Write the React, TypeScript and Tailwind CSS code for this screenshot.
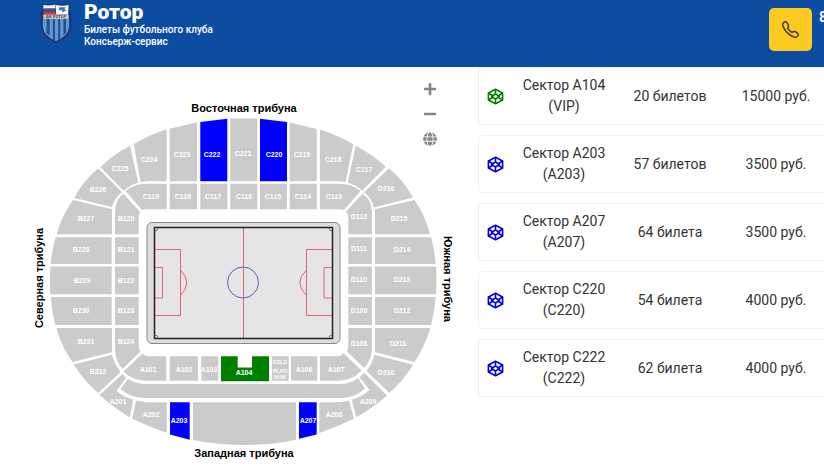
import { BsTelephone } from 'react-icons/bs';
import { FaGlobe, FaMinus, FaPlus } from 'react-icons/fa';

const GRAY = '#cbcbcb';
const BLUE = '#0000ff';
const GREEN = '#008000';

type Sector = { id: string; d: string; x: number; y: number; fill?: string };

const sectors: Sector[] = [
  // east stand, upper tier
  { id: 'C225', d: 'M130 145.7L138.3 182.5Q130 185 123.7 190.7L100.3 167Q114 154 130 145.7Z', x: 120, y: 169 },
  { id: 'C224', d: 'M133.7 144.3Q149 135 166.7 129.3V181.3H147L140.5 182Z', x: 149, y: 160 },
  { id: 'C223', d: 'M169.7 128.7L197 122.3V181.3H169.7Z', x: 182, y: 155 },
  { id: 'C222', d: 'M200.3 122L227.3 118.7V181.3H200.3Z', x: 212, y: 155, fill: BLUE },
  { id: 'C221', d: 'M230.3 118.5H257.3V181.3H230.3Z', x: 243, y: 154 },
  { id: 'C220', d: 'M260 118.7L287 122V181.3H260Z', x: 274, y: 155, fill: BLUE },
  { id: 'C219', d: 'M289.7 122.5L316.7 129V181.3H289.7Z', x: 302, y: 155 },
  { id: 'C218', d: 'M320 129.7Q338 135 353.3 144.3L345.5 182L340 181.3H320Z', x: 333, y: 160 },
  { id: 'C217', d: 'M355.7 145.7Q372 154 385.7 166.7L362.3 190.7Q356 185 347.7 182.5Z', x: 364, y: 170 },
  // north stand, upper tier
  { id: 'B226', d: 'M98.3 168.3L122 192.3Q114.5 198 112 207L74.3 198Q83 181 98.3 168.3Z', x: 98, y: 190 },
  { id: 'B227', d: 'M73 200L112 209.3V234.3H56.7Q62 215 73 200Z', x: 86, y: 219 },
  { id: 'B228', d: 'M55.7 237.3H111.7V264H50.7Q52 249 55.7 237.3Z', x: 81, y: 250 },
  { id: 'B229', d: 'M50.3 266.5H111.7V294.3H50.3Q49.7 280 50.3 266.5Z', x: 82, y: 281 },
  { id: 'B230', d: 'M50.7 297H111.7V325H55.3Q52 312 50.7 297Z', x: 81, y: 311 },
  { id: 'B231', d: 'M56.3 328H112V352.3L72.5 362Q61 346 56.3 328Z', x: 86, y: 342 },
  { id: 'B232', d: 'M73.7 364.5L112 354.7Q114.5 364 120.7 372L98.3 393Q84 381 73.7 364.5Z', x: 98, y: 372 },
  // south stand, upper tier
  { id: 'D216', d: 'M389 168.3Q404 181 413 197.5L374 207.5Q371.5 198 364 192.3Z', x: 386, y: 189 },
  { id: 'D215', d: 'M375 209.3L414.5 200Q425 215 430 234.3H375Z', x: 399, y: 219 },
  { id: 'D214', d: 'M375 237.3H431Q434.5 249 435.7 264H375Z', x: 402, y: 250 },
  { id: 'D213', d: 'M375 266.5H436.2Q436.7 280 436.2 294.3H375Z', x: 402, y: 280 },
  { id: 'D212', d: 'M375 297H435.7Q434.5 312 431 325H375Z', x: 402, y: 311 },
  { id: 'D211', d: 'M375 328H430.3Q425 346 414.5 362L375 352.3Z', x: 398, y: 344 },
  { id: 'D210', d: 'M374.3 354.7L413 364.7Q403 381 389.3 393L366.5 371Q372 364 374.3 354.7Z', x: 386, y: 373 },
  // lower ring
  { id: 'C119', d: 'M125.5 191Q134 183.7 147 183.7H166.7V209.3H146Q144 209.3 142 210Z', x: 151, y: 197 },
  { id: 'C118', d: 'M169.7 183.7H197V209.3H169.7Z', x: 183, y: 197 },
  { id: 'C117', d: 'M200.3 183.7H227.3V209.3H200.3Z', x: 213, y: 197 },
  { id: 'C116', d: 'M230.3 183.7H257.3V209.3H230.3Z', x: 244, y: 197 },
  { id: 'C115', d: 'M260 183.7H287V209.3H260Z', x: 273, y: 197 },
  { id: 'C114', d: 'M289.7 183.7H316.7V209.3H289.7Z', x: 303, y: 197 },
  { id: 'C113', d: 'M320 183.7H339Q352 183.7 360.5 191L344 210Q342 209.3 340 209.3H320Z', x: 334, y: 197 },
  { id: 'B120', d: 'M123.3 193.5L140 212Q138.7 214 138.7 217V234.3H115V212Q115 200 123.3 193.5Z', x: 126, y: 219 },
  { id: 'B121', d: 'M115 237.3H138.7V264H115Z', x: 126, y: 250 },
  { id: 'B122', d: 'M115 266.5H138.7V294.3H115Z', x: 126, y: 281 },
  { id: 'B123', d: 'M115 297H138.7V325H115Z', x: 126, y: 311 },
  { id: 'B124', d: 'M115 328H138.7V346Q138.7 349 140.5 351.5L122.5 369Q115 361 115 348Z', x: 126, y: 342 },
  { id: 'D112', d: 'M362.7 193.5Q372 200 372 212V234.3H348.3V217Q348.3 214 346 211.5Z', x: 359, y: 217 },
  { id: 'D111', d: 'M348.3 237.3H372V264H348.3Z', x: 359, y: 249 },
  { id: 'D110', d: 'M348.3 266.5H372V294.3H348.3Z', x: 359, y: 280 },
  { id: 'D109', d: 'M348.3 297H372V325H348.3Z', x: 359, y: 311 },
  { id: 'D108', d: 'M348.3 328H372V348Q372 360 364 368L346.5 351Q348.3 349 348.3 346Z', x: 359, y: 344 },
  { id: 'A101', d: 'M142.5 353.5Q145 356.3 149 356.3H166.3V380.7H145Q131 380 123.5 371.5Z', x: 148, y: 370 },
  { id: 'A102', d: 'M169.7 356.3H198V380.7H169.7Z', x: 184, y: 370 },
  { id: 'A103', d: 'M201.3 356.3H218.3V380.7H201.3Z', x: 209, y: 370 },
  { id: 'A104', d: 'M221 356.3H237.7V367.5H252V356.3H269V381.3H221Z', x: 244, y: 373, fill: GREEN },
  { id: 'A106', d: 'M291 356.3H317.3V380.7H291Z', x: 304, y: 370 },
  { id: 'A107', d: 'M320 356.3H337Q341 356.3 343.5 353L361.5 370.5Q353 380 339 380.7H320Z', x: 336, y: 370 },
  // west stand, upper tier
  { id: 'A201', d: 'M99.5 395L122.5 374L126 378L116.5 391Q124 397.5 133.3 399.5L129.7 417.5Q113 407 99.5 395Z', x: 118, y: 402 },
  { id: 'A202', d: 'M136 400.5L146 402.3H166.7V432.7Q149 427 132.3 418.7Z', x: 151, y: 415 },
  { id: 'A203', d: 'M170 402.3H189.7V439.7L170 434.5Z', x: 179, y: 421, fill: BLUE },
  { id: 'A207', d: 'M299 402.3H316.7V434.5L299 438.7Z', x: 308, y: 421, fill: BLUE },
  { id: 'A208', d: 'M319.3 402.3H341L349 400.5L354 418.7Q337 427 319.3 433Z', x: 334, y: 415 },
  { id: 'A209', d: 'M351.7 399.5Q362 397 369.5 390L359.5 377L364.5 373L387 395.5Q373 408 356.3 417.3Z', x: 368, y: 402 },
];

const offers = [
  { sector: 'A104', place: 'VIP', count: '20 билетов', price: '15000 руб.', color: 'text-[#008000]' },
  { sector: 'A203', place: 'A203', count: '57 билетов', price: '3500 руб.', color: 'text-[#0000e0]' },
  { sector: 'A207', place: 'A207', count: '64 билета', price: '3500 руб.', color: 'text-[#0000e0]' },
  { sector: 'C220', place: 'C220', count: '54 билета', price: '4000 руб.', color: 'text-[#0000e0]' },
  { sector: 'C222', place: 'C222', count: '62 билета', price: '4000 руб.', color: 'text-[#0000e0]' },
];

function ClubLogo() {
  return (
    <svg viewBox="1 1 30 38" className="h-10 w-8 shrink-0" aria-label="Ротор">
      <path d="M3 2Q9 3 16 1Q23 3 29 2L28.5 7Q31 9 30.5 14V24Q29 34 16 39Q3 34 1.5 24V14Q1 9 3.5 7Z" fill="#17376f" />
      <path d="M3.5 16H28.5V24Q27 33 16 37Q5 33 3.5 24Z" fill="#6499d6" />
      <path d="M7 16H10V32L7 29.5ZM13 16H15V37L13 36ZM18 16H20V35.5L18 36.5ZM23 16H25.5V29L23 32Z" fill="#24508f" />
      <path d="M4 3Q10 4 15.5 2.5V7H4Z" fill="#f5f5f5" />
      <path d="M4 6H15.5V9H4Z" fill="#3450a8" />
      <path d="M4 9H15.5V12H4Z" fill="#d83345" />
      <path d="M16 3Q22 4 28 3L27.5 12H16Z" fill="#f4f7fb" />
      <path d="M19 5H25L24 7L26 8L22 10V8H19Z" fill="#3d70b8" />
      <path d="M4 12H28V16H4Z" fill="#d9d4da" />
      <text x="16" y="15.5" textAnchor="middle" fontSize="4" fontWeight="700" fill="#4d3b4c">ФК РОТОР</text>
    </svg>
  );
}

function SectorIcon({ className }: { className: string }) {
  return (
    <svg viewBox="0 0 17 17" fill="none" stroke="currentColor" strokeWidth="1.6" strokeLinejoin="round" className={className} aria-hidden="true">
      <path d="M8.5 1.2L15.6 5V12L8.5 15.8L1.4 12V5Z" />
      <path d="M8.5 5.8L12.3 8.5L8.5 11.2L4.7 8.5Z" />
      <path d="M8.5 1.2V5.8M8.5 11.2V15.8M1.4 5L6 8M15.6 5L11 8M1.4 12L6 9M15.6 12L11 9" />
    </svg>
  );
}

function Pitch() {
  return (
    <g fill="none" strokeWidth="1">
      <rect x="147" y="222.5" width="193" height="121" rx="5" fill="#dddddd" stroke="#888888" />
      <rect x="154.5" y="227.5" width="178" height="111" fill="#e6e4e5" />
      <g stroke="#dc6673">
        <path d="M243.5 228V338M154 249.5H180.5V315.5H154M154 267.5H162.5V298H154M332 249.5H306.5V315.5H332M332 267.5H324V298H332" />
        <path d="M180.5 270Q193 282.5 180.5 295.5M306.5 270Q293 282.5 306.5 295.5" />
      </g>
      <circle cx="243" cy="282.5" r="15.5" stroke="#5267a5" />
      <rect x="154.5" y="227.5" width="178" height="111" stroke="#222222" strokeWidth="1.5" />
      <path d="M155 231Q158 231 158 228M329 228Q329 231 332 231M155 335Q158 335 158 338M329 338Q329 335 332 335" stroke="#777777" />
    </g>
  );
}

function StadiumMap() {
  return (
    <svg viewBox="0 67 478 408" className="block w-full font-['Liberation_Sans',Arial,sans-serif]">
      {sectors.map((s) => (
        <path key={s.id} d={s.d} fill={s.fill ?? GRAY} />
      ))}
      <path d="M272 356.3H288.7V380.7H272Z" fill={GRAY} />
      <path d="M128 379Q136 384 147 384H340Q350 384 358 378L365 388.5Q355 398 340 398H147Q130 398 120.5 389Z" fill={GRAY} />
      <path d="M193 402.3H296V439.7Q271 445 244 445Q218 445 193 440Z" fill={GRAY} />
      <g fill="#ffffff" fontSize="7" fontWeight="700" textAnchor="middle">
        {sectors.map((s) => (
          <text key={s.id} x={s.x} y={s.y + 2}>{s.id}</text>
        ))}
        <g fontSize="5">
          <text x="280" y="364">GOLD</text>
          <text x="280" y="373">PLATI</text>
          <text x="280" y="379">NUM</text>
        </g>
      </g>
      <Pitch />
      <g fill="#000000" fontSize="11" fontWeight="700" textAnchor="middle">
        <text x="244" y="112">Восточная трибуна</text>
        <text x="244" y="457">Западная трибуна</text>
        <text transform="translate(43 278) rotate(-90)">Северная трибуна</text>
        <text transform="translate(444 279) rotate(90)">Южная трибуна</text>
      </g>
    </svg>
  );
}

export default function App() {
  return (
    <div className="min-h-screen overflow-hidden bg-white font-[Roboto,sans-serif] text-[#333333]">
      <header className="flex h-[67px] items-start bg-[#0d4da1] pl-10 text-white">
        <a href="#" className="flex gap-3">
          <div className="pt-[3px]">
            <ClubLogo />
          </div>
          <div>
            <h1 className="text-[21px] leading-6 font-black">Ротор</h1>
            <p className="text-[10px] leading-3 font-medium">Билеты футбольного клуба<br />Консьерж-сервис</p>
          </div>
        </a>
        <div className="ml-auto flex w-[55px] shrink-0 gap-[7px] pt-2">
          <button type="button" aria-label="Позвонить" className="flex size-[43px] shrink-0 items-center justify-center rounded-[5px] bg-[#fcca20] text-[#333333]">
            <BsTelephone className="size-[17px] stroke-[0.3]" />
          </button>
          <a href="tel:8" className="text-[14px] leading-[18px] font-bold">8</a>
        </div>
      </header>

      <main className="flex items-start">
        <div className="relative min-w-0 flex-1">
          <StadiumMap />
          <div className="absolute top-[14px] right-10 flex flex-col gap-[9px] text-[#858585]">
            <button type="button" aria-label="Увеличить" className="flex size-4 items-center justify-center"><FaPlus className="size-[14px]" /></button>
            <button type="button" aria-label="Уменьшить" className="flex size-4 items-center justify-center"><FaMinus className="size-[14px]" /></button>
            <button type="button" aria-label="Показать всё" className="flex size-4 items-center justify-center"><FaGlobe className="size-[14px]" /></button>
          </div>
        </div>
        <ul className="flex w-[346px] shrink-0 flex-col gap-[10px]">
          {offers.map((o) => (
            <li key={o.sector} className="grid h-[58px] w-[360px] grid-cols-[32px_106px_106px_106px] items-center rounded-[4px] border border-[#f1f1f1] text-center text-[14px] leading-[21px]">
              <SectorIcon className={`size-[17px] justify-self-center ${o.color}`} />
              <span>Сектор {o.sector}<br />({o.place})</span>
              <span>{o.count}</span>
              <span>{o.price}</span>
            </li>
          ))}
        </ul>
      </main>
    </div>
  );
}
